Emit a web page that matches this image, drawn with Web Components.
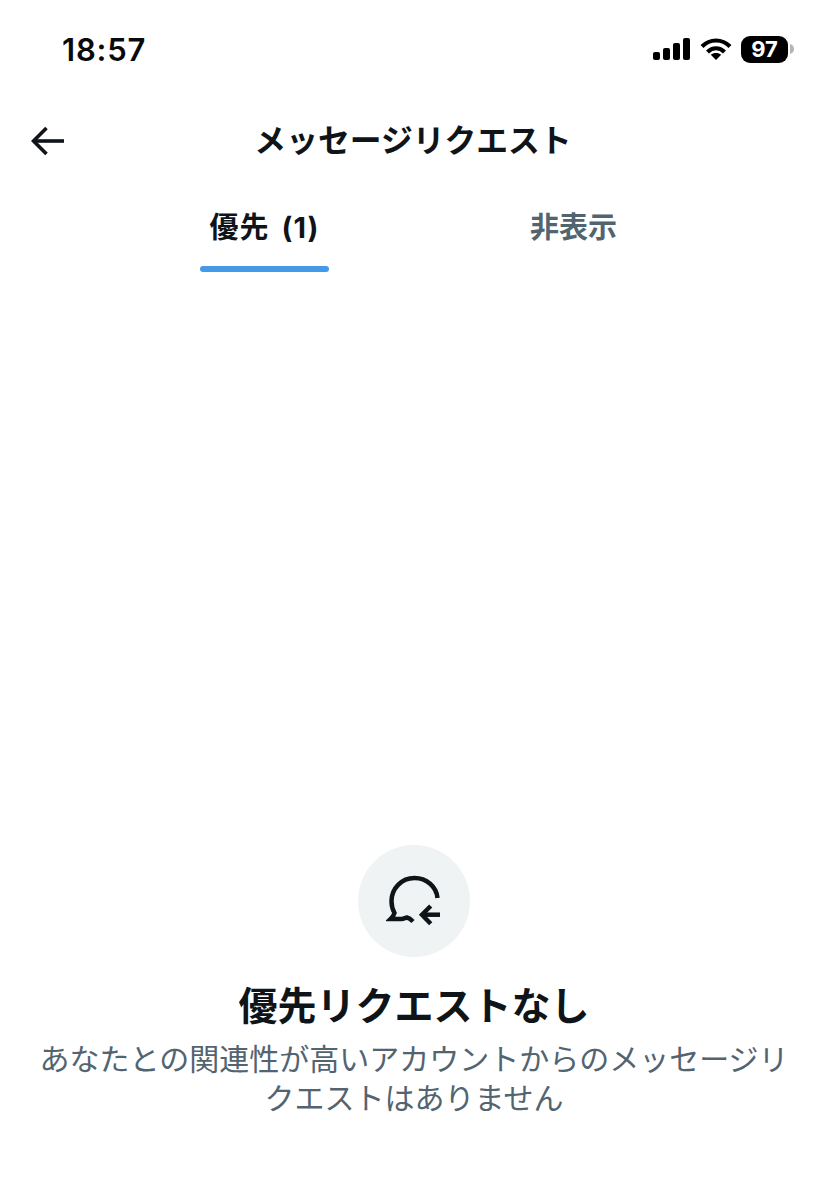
<!DOCTYPE html>
<html lang="ja">
<head>
<meta charset="utf-8">
<style>
  html, body { margin: 0; height: 100%; background: #fff; }
  body { font-family: "Inter", "Noto Sans CJK JP", sans-serif; }
</style>
</head>
<body>
<message-requests-page>
  <status-bar time="18:57" battery="97" slot="status"></status-bar>
  <nav-header title="メッセージリクエスト" slot="header"></nav-header>
  <tab-bar slot="tabs">
    <tab-item active>優先 (1)</tab-item>
    <tab-item>非表示</tab-item>
  </tab-bar>
  <empty-state heading="優先リクエストなし">あなたとの関連性が高いアカウントからのメッセージリクエストはありません</empty-state>
</message-requests-page>

<script>
const FONT = '"Inter", "Noto Sans CJK JP", sans-serif';

class MessageRequestsPage extends HTMLElement {
  constructor() {
    super();
    this.attachShadow({ mode: 'open' }).innerHTML = `
      <style>
        :host { display: flex; flex-direction: column; width: 828px; height: 1184px; overflow: hidden; background: #fff; }
        .main { flex: 1; display: flex; flex-direction: column; justify-content: flex-end; }
      </style>
      <slot name="status"></slot>
      <slot name="header"></slot>
      <slot name="tabs"></slot>
      <div class="main"><slot></slot></div>
    `;
  }
}

class StatusBar extends HTMLElement {
  constructor() {
    super();
    this.attachShadow({ mode: 'open' }).innerHTML = `
      <style>
        :host { display: flex; align-items: center; justify-content: space-between; height: 50px; padding: 24px 34px 0 62px; font-family: ${FONT}; color: #0a0a0a; }
        .time { margin-top: 2px; font-size: 31px; font-weight: 600; letter-spacing: .8px; line-height: 50px; }
        .icons { display: flex; align-items: center; gap: 9px; }
        svg { display: block; }
        .battery { display: flex; align-items: center; gap: 2px; }
        .level { width: 47px; height: 27px; border-radius: 9px; background: #000; color: #fff; font-size: 22px; font-weight: 700; line-height: 27px; text-align: center; }
      </style>
      <span class="time"></span>
      <div class="icons">
        <svg width="38" height="24" viewBox="0 0 38 24" fill="#000">
          <rect x="0" y="15" width="7" height="8" rx="2"/>
          <rect x="10" y="11" width="7" height="12" rx="2"/>
          <rect x="20" y="6" width="7" height="17" rx="2"/>
          <rect x="30" y="1" width="7" height="22" rx="2"/>
        </svg>
        <svg width="32" height="24" viewBox="0 0 32 24" fill="none" stroke="#000" stroke-width="4.2">
          <path d="M2 9.5C10 1.5 22 1.5 30 9.5"/>
          <path d="M7.5 15C12.5 10 19.5 10 24.5 15"/>
          <path d="M16 23l-5.2-5.2C13.5 15.3 18.500 15.300 21.200 17.800z" fill="#000" stroke="none"/>
        </svg>
        <div class="battery">
          <span class="level"></span>
          <svg width="4" height="10" viewBox="0 0 4 10"><path d="M0 0c2.500.5 4 2.500 4 5s-1.500 4.500-4 5z" fill="#b5b5b5"/></svg>
        </div>
      </div>
    `;
  }

  connectedCallback() {
    this.shadowRoot.querySelector('.time').textContent = this.getAttribute('time');
    this.shadowRoot.querySelector('.level').textContent = this.getAttribute('battery');
  }
}

class NavHeader extends HTMLElement {
  constructor() {
    super();
    this.attachShadow({ mode: 'open' }).innerHTML = `
      <style>
        :host { display: grid; grid-template-columns: 80px 1fr 80px; align-items: center; height: 60px; margin-top: 36px; padding-right: 2px; box-sizing: border-box; font-family: ${FONT}; color: #0f1419; }
        button { all: unset; display: flex; padding-left: 31px; }
        h1 { margin: 1px 0 0; font-size: 31.8px; font-weight: 700; line-height: 60px; text-align: center; white-space: nowrap; }
        svg { display: block; }
      </style>
      <button type="button" aria-label="戻る">
        <svg width="34" height="30" viewBox="0 0 34 30" fill="none" stroke="#0f1419" stroke-width="3.600">
          <path d="M33 15H3"/>
          <path d="M15.500 2L2.500 15l13 13"/>
        </svg>
      </button>
      <h1></h1>
      <span></span>
    `;
  }

  connectedCallback() {
    this.shadowRoot.querySelector('h1').textContent = this.getAttribute('title');
  }
}

class TabBar extends HTMLElement {
  constructor() {
    super();
    this.attachShadow({ mode: 'open' }).innerHTML = `
      <style>
        :host { display: flex; justify-content: center; gap: 180px; padding-left: 10px; height: 102px; }
      </style>
      <slot></slot>
    `;
  }
}

class TabItem extends HTMLElement {
  constructor() {
    super();
    this.attachShadow({ mode: 'open' }).innerHTML = `
      <style>
        :host { display: flex; flex-direction: column; align-items: center; width: 129px; font-family: ${FONT}; font-size: 29px; font-weight: 700; color: #536471; }
        :host([active]) { color: #0f1419; letter-spacing: 1px; word-spacing: 4px; }
        .label { line-height: 56px; margin-top: 30px; white-space: nowrap; flex: 1; }
        .bar { width: 100%; height: 6px; border-radius: 3px; background: transparent; }
        :host([active]) .bar { background: #4599e6; }
      </style>
      <span class="label"><slot></slot></span>
      <span class="bar"></span>
    `;
  }
}

class EmptyState extends HTMLElement {
  constructor() {
    super();
    this.attachShadow({ mode: 'open' }).innerHTML = `
      <style>
        :host { display: flex; flex-direction: column; align-items: center; padding: 0 32px 66px; font-family: ${FONT}; }
        .badge { display: flex; align-items: center; justify-content: center; width: 112px; height: 112px; border-radius: 50%; background: #eff3f4; }
        svg { display: block; }
        h2 { margin: 22px 0 7px; font-size: 39px; font-weight: 700; line-height: 54px; color: #0f1419; }
        p { margin: 0; font-size: 30px; line-height: 39px; color: #536471; text-align: center; }
      </style>
      <div class="badge">
        <svg width="56" height="56" viewBox="0 0 56 56" fill="none" stroke="#0f1419" stroke-width="4.500">
          <path d="M51.500 25C50.500 13.500 40.500 5 28.500 5 15.500 5 5.500 15.500 5.500 28c0 4.500 1 8.500 3 12-.5 2-2 4-4 6h11c2 0 3.500-1 5.500-1.500 2 .5 4 2 6 4"/>
          <path d="M54 41.700H36"/>
          <path d="M44.700 33L36 41.700l8.700 9"/>
        </svg>
      </div>
      <h2></h2>
      <p><slot></slot></p>
    `;
  }

  connectedCallback() {
    this.shadowRoot.querySelector('h2').textContent = this.getAttribute('heading');
  }
}

customElements.define('message-requests-page', MessageRequestsPage);
customElements.define('status-bar', StatusBar);
customElements.define('nav-header', NavHeader);
customElements.define('tab-bar', TabBar);
customElements.define('tab-item', TabItem);
customElements.define('empty-state', EmptyState);
</script>
</body>
</html>
